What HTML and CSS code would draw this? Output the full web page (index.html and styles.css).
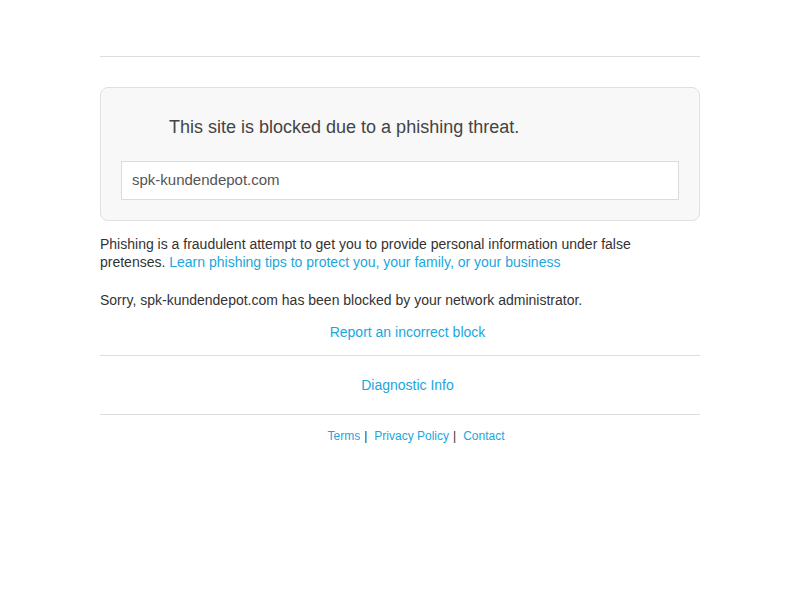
FILE: index.html
```html
<!DOCTYPE html>
<html>
<head>
<meta charset="utf-8">
<title>Blocked</title>
<link rel="stylesheet" href="styles.css">
</head>
<body>
<div class="page">
  <div class="box">
    <h1 class="title">This site is blocked due to a phishing threat.</h1>
    <div class="url">spk-kundendepot.com</div>
  </div>
  <p class="info">Phishing is a fraudulent attempt to get you to provide personal information under false pretenses. <a href="#">Learn phishing tips to protect you, your family, or your business</a></p>
  <p class="sorry">Sorry, spk-kundendepot.com has been blocked by your network administrator.</p>
  <div class="center report"><a href="#">Report an incorrect block</a></div>
  <div class="center diag"><a href="#">Diagnostic Info</a></div>
  <div class="footer">
    <a href="#">Terms</a><span class="sep">|</span><a href="#">Privacy Policy</a><span class="sep">|</span><a href="#">Contact</a>
  </div>
</div>
</body>
</html>
```
FILE: styles.css
```css
html, body {
  margin: 0;
  padding: 0;
  background: #fff;
}
body {
  font-family: "Liberation Sans", Arial, sans-serif;
  font-size: 14px;
  line-height: 18px;
  color: #333;
}
a {
  color: #1aa7dc;
  text-decoration: none;
}
.page {
  width: 600px;
  margin: 56px auto 0;
  border-top: 1px solid #ddd;
}
.box {
  margin-top: 30px;
  background: #f8f8f8;
  border: 1px solid #e0e0e0;
  border-radius: 8px;
  padding: 20px;
}
.title {
  margin: 0 0 15px;
  padding-left: 48px;
  font-size: 18px;
  font-weight: normal;
  line-height: 38px;
  color: #444;
}
.url {
  height: 37px;
  line-height: 36px;
  background: #fff;
  border: 1px solid #dcdcdc;
  padding: 0 10px;
  font-size: 15px;
  color: #555;
}
.info {
  margin: 14px 0 0;
}
.sorry {
  margin: 20px 0 0;
}
.center {
  text-align: center;
  padding-left: 15px;
}
.report {
  margin-top: 14px;
  padding-bottom: 14px;
  border-bottom: 1px solid #ddd;
}
.diag {
  padding-top: 20px;
  padding-bottom: 20px;
  border-bottom: 1px solid #ddd;
}
.footer {
  margin-top: 14px;
  text-align: center;
  font-size: 12px;
  line-height: 14px;
  padding-left: 32px;
}
.sep {
  color: #333;
  margin: 0 7px 0 4px;
}
```
